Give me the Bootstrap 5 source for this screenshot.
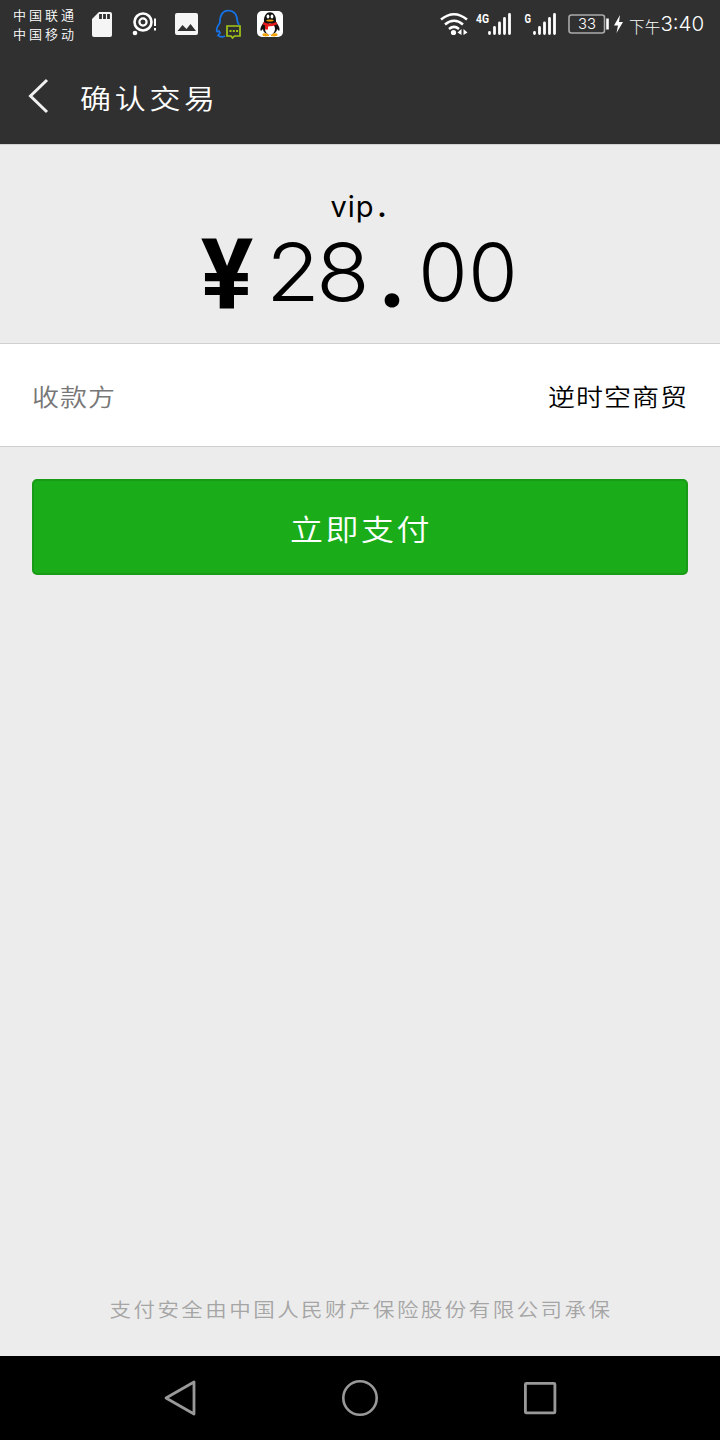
<!DOCTYPE html>
<html lang="zh-CN">
<head>
<meta charset="utf-8">
<meta name="viewport" content="width=device-width, initial-scale=1">
<title>确认交易</title>
<link href="https://cdn.jsdelivr.net/npm/bootstrap@5.3.0/dist/css/bootstrap.min.css" rel="stylesheet">
<style>
body{font-family:Inter,"Noto Sans CJK SC",sans-serif;background:#ececec;color:#000}
.screen{height:1440px;overflow:hidden}
.dark-bar{background:#303030;color:#fff}
.status-bar{height:48px;padding:0 15px 0 13px}
.carriers{font-size:13px;line-height:19px;letter-spacing:3px;width:78px;color:#fff;font-weight:350;padding-top:1px}
.clock{font-size:20.5px;font-weight:300;line-height:48px;width:76px;padding-top:2px}
.clock small{font-size:15.5px;letter-spacing:.2px;position:relative;top:2px}
.title-bar{height:96px;padding-left:28px}
.brush{display:inline-block;transform:scaleY(.88);font-weight:350}
.title-text{font-size:31px;letter-spacing:3.7px;margin-left:31px;line-height:40px;padding-top:8px}
.amount-panel{height:199px;border-top:1px solid #d2d2d2;padding-top:42px}
.payee-name{font-size:29px;line-height:40px;letter-spacing:1px;padding-right:3px}
.payee-name span{font-family:Lato,sans-serif;font-weight:900;font-size:29px;line-height:1;margin-left:4px}
.amount{height:76px;width:316px;margin-top:7px;line-height:76px;font-size:80px;font-weight:300}
.amount span{width:50px;text-align:center;display:block;flex:none}
.amount .wide{transform:scaleX(1.1)}
.amount .yen{font-family:Roboto,sans-serif;font-weight:700;font-size:98px;margin-right:16px;display:flex;justify-content:center;padding-top:4px}
.amount .point{font-family:Lato,sans-serif;font-weight:900;font-size:90px;margin-left:-1px;margin-right:1px}
.payee-row{height:104px;border-top:1px solid #cfcfcf;border-bottom:1px solid #cfcfcf;padding:7px 33px 0 32px;font-size:27px}
.payee-label{color:#777;letter-spacing:1px}
.payee-value{letter-spacing:1px;margin-right:-1px}
.btn-pay,.btn-pay:hover{height:96px;background:#1aad19;border:2px solid #189b17;border-radius:5px;color:#fff;font-size:33px;padding-top:14px}
.btn-pay .brush{letter-spacing:2.5px;margin-right:-2px}
.insurer{color:#a5a5a5;font-size:21.5px;letter-spacing:2.45px;line-height:32px;margin-bottom:30px;white-space:nowrap;padding-left:2px}
.nav-keys{height:84px;background:#000;padding:0 160px}
</style>
</head>
<body>
<div class="screen d-flex flex-column">
  <div class="status-bar dark-bar d-flex align-items-center flex-shrink-0">
    <div class="carriers text-nowrap">中国联通<br>中国移动</div>
    <svg width="192" height="48" viewBox="91 0 192 48" fill="none">
      <path d="M99 12h11q2 0 2 2v21q0 2-2 2H94q-2 0-2-2V19z" fill="#f5f5f5"/>
      <path d="M100.500 14v5M104.500 14v5M108.500 14v5" stroke="#303030" stroke-width="2.800"/>
      <circle cx="143" cy="22" r="8.500" stroke="#fff" stroke-width="2.600"/>
      <circle cx="143" cy="22" r="3.600" stroke="#fff" stroke-width="2.200"/>
      <circle cx="135" cy="33" r="2.300" fill="#fff"/>
      <path d="M155 18.500v7.500M155 28v2.500" stroke="#fff" stroke-width="2"/>
      <rect x="175" y="13" width="23" height="22" rx="2" fill="#f5f5f5"/>
      <path d="M177.500 31l5-6 4 4 4-5 5.500 7z" fill="#303030"/>
      <path d="M225 36q-3 2-7-.5l2-2.500-1-2q-3 2-2.200-2 .3-2.500 3-6 0-12 8.200-12.500Q237 10.500 237.500 22l1.500 3" stroke="#1473e6" stroke-width="1.700"/>
      <path d="M227 26h13v10h-5.500l-2 2-1.500-2H227z" fill="#303030" stroke="#a2c617" stroke-width="1.700"/>
      <path d="M229.500 31h9" stroke="#a2c617" stroke-width="2" stroke-dasharray="2 1.300"/>
      <rect x="257" y="11" width="26" height="26" rx="5" fill="#fff"/>
      <path d="M264 22c-1-13 13-13 12 0 4 5 4 8 3 9l-2-2c0 7-14 7-14 0l-2 2c-1-1-1-4 3-9z" fill="#111"/>
      <ellipse cx="270" cy="29" rx="5" ry="5.500" fill="#fff"/>
      <path d="M263 34q4-1 6 1.500-4 1-6-.2zM277 34q-4-1-6 1.500 4 1 6-.2z" fill="#f5a000" stroke="#f5a000"/>
      <path d="M263.500 22q6 3.500 13 0l.5 2.500q-4 2-9 2v3h-3v-4l-2-1z" fill="#e61a1a"/>
      <ellipse cx="268" cy="16.500" rx="1.400" ry="2" fill="#fff"/><ellipse cx="272" cy="16.500" rx="1.400" ry="2" fill="#fff"/>
      <ellipse cx="270" cy="20.500" rx="3.600" ry="1.100" fill="#f5a000"/>
    </svg>
    <svg class="ms-auto" width="189" height="48" viewBox="440 0 189 48" fill="none">
      <g stroke="#fff" stroke-width="2.500"><path d="M441 19.500q13-10.500 26 0M445 24.500q9-7.500 18 0M449 29q5-4.200 10 0"/></g>
      <circle cx="453.500" cy="32.500" r="2.600" fill="#fff"/>
      <path d="M461.500 29v6l-4-2.500zM463.500 29v6l4-2.500z" fill="#fff"/>
      <g fill="#fff" font-family="Roboto" font-size="13" font-weight="700">
        <text x="476" y="22.800" textLength="13" lengthAdjust="spacingAndGlyphs">4G</text>
        <text x="524.500" y="22.800" textLength="6.500" lengthAdjust="spacingAndGlyphs">G</text>
      </g>
      <path d="M489.500 32.500v1M494.500 27.500v6M499.500 23v10.500M504.500 18.500v15M509.500 14.500v19M534.500 32.500v1M539.500 27.500v6M544.500 23v10.500M549.500 18.500v15M554.500 14.500v19" stroke="#fff" stroke-width="2.800" stroke-linecap="round"/>
      <rect x="569" y="15" width="35.500" height="18" rx="2.500" stroke="#aaa" stroke-width="1.600"/>
      <text x="578" y="29.300" fill="#fff" font-family="Inter" font-weight="300" font-size="14.500" textLength="18" lengthAdjust="spacingAndGlyphs">33</text>
      <path d="M607.500 18.500v11" stroke="#fff" stroke-width="2.600"/>
      <path d="M620 15l-6 10.500h4l-1.500 7.500 6.500-11h-4z" fill="#fff"/>
    </svg>
    <div class="clock text-nowrap"><small>下午</small>3:40</div>
  </div>
  <header class="title-bar dark-bar d-flex align-items-center flex-shrink-0">
    <svg width="21" height="36" viewBox="28 78 21 36"><path d="M47 80L30.500 96 47 112" fill="none" stroke="#f0f0f0" stroke-width="3"/></svg>
    <div class="title-text brush">确认交易</div>
  </header>
  <section class="amount-panel flex-shrink-0">
    <div class="payee-name text-center">vip<span>.</span></div>
    <div class="amount d-flex mx-auto"><span class="yen">¥</span><span class="wide">2</span><span class="wide">8</span><span class="point">.</span><span>0</span><span>0</span></div>
  </section>
  <section class="payee-row bg-white d-flex justify-content-between align-items-center flex-shrink-0">
    <span class="payee-label brush">收款方</span>
    <span class="payee-value brush">逆时空商贸</span>
  </section>
  <div class="px-4 mx-2" style="margin-top:32px">
    <button type="button" class="btn btn-pay w-100"><span class="brush">立即支付</span></button>
  </div>
  <footer class="mt-auto">
    <div class="insurer text-center"><span class="brush">支付安全由中国人民财产保险股份有限公司承保</span></div>
    <nav class="nav-keys d-flex justify-content-between align-items-center" aria-label="系统导航">
      <svg width="40" height="40" viewBox="160 1378 40 40"><path d="M194 1382v32l-28-16z" fill="none" stroke="#999" stroke-width="2.800" stroke-linejoin="round"/></svg>
      <svg width="40" height="40" viewBox="340 1378 40 40"><circle cx="360" cy="1398" r="16.700" fill="none" stroke="#999" stroke-width="2.600"/></svg>
      <svg width="40" height="40" viewBox="520 1378 40 40"><rect x="525.400" y="1383.400" width="29.500" height="29.500" rx="1" fill="none" stroke="#999" stroke-width="2.800"/></svg>
    </nav>
  </footer>
</div>
<script src="https://cdn.jsdelivr.net/npm/bootstrap@5.3.0/dist/js/bootstrap.bundle.min.js"></script>
</body>
</html>
